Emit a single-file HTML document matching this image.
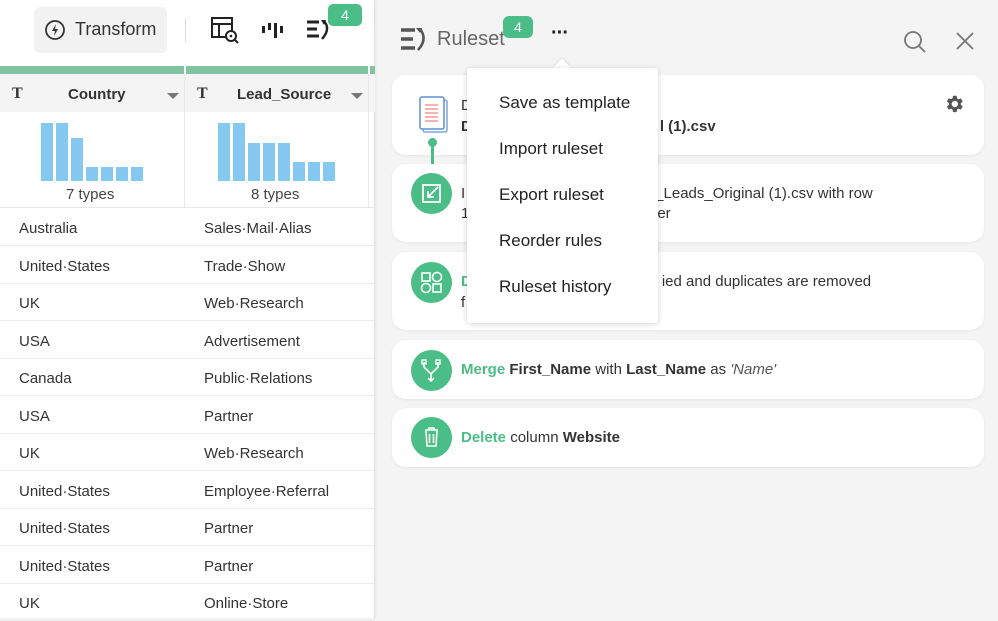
<!DOCTYPE html>
<html><head><meta charset="utf-8"><style>
*{box-sizing:border-box;margin:0;padding:0}
body{width:998px;height:618px;overflow:hidden;font-family:"Liberation Sans",sans-serif;background:#f4f4f4;position:relative;color:#333}
.left{position:absolute;left:0;top:0;width:375px;height:618px;background:#fff;border-right:1px solid #e2e2e2;box-shadow:1px 0 3px rgba(0,0,0,.06)}
.abs{position:absolute}
.row{position:absolute;left:0;width:375px;height:37.5px;border-bottom:1px solid #ececec;font-size:15px;color:#333}
.row span{position:absolute;top:12px}
.bar{position:absolute;background:#85c9f0;width:12px}
.card{position:absolute;left:392px;width:592px;background:#fff;border-radius:14px;box-shadow:0 1px 3px rgba(0,0,0,.06)}
.ic{position:absolute;left:19px;width:41px;height:41px;border-radius:50%;background:#4bbd87}
.ct{position:absolute;left:69px;font-size:15px;color:#333;line-height:22px}
.g{color:#4bbd87;font-weight:bold}
.menu{position:absolute;left:467px;top:68px;width:191px;height:255px;background:#fff;border-radius:3px;box-shadow:0 1px 6px rgba(0,0,0,.18)}
.menu div{position:absolute;left:32px;font-size:17px;color:#222}
</style></head><body>
<div class="left">
 <div class="abs" style="left:34px;top:7px;width:133px;height:46px;background:#f2f2f2;border-radius:6px"></div>
 <svg class="abs" style="left:44px;top:19px" width="22" height="22" viewBox="0 0 22 22"><circle cx="11" cy="11" r="9" fill="none" stroke="#333" stroke-width="1.8"/><path d="M12 5L8 12h3l-1 5 4-7h-3z" fill="#333"/></svg>
 <div class="abs" style="left:75px;top:19px;font-size:18px;color:#333">Transform</div>
 <div class="abs" style="left:185px;top:18px;width:1px;height:24px;background:#ddd"></div>
 <svg class="abs" style="left:211px;top:17px" width="30" height="28" viewBox="0 0 30 28"><rect x="1" y="1" width="20" height="19" fill="none" stroke="#222" stroke-width="2"/><path d="M1 7h20M8 7v13" stroke="#222" stroke-width="2"/><circle cx="20" cy="19" r="5" fill="#fff" stroke="#222" stroke-width="2"/><circle cx="20" cy="19" r="1.3" fill="#222"/><path d="M24 23l3 3" stroke="#222" stroke-width="2"/></svg>
 <svg class="abs" style="left:261px;top:22px" width="24" height="16"><rect x="1" y="4" width="3" height="7" fill="#222"/><rect x="7" y="1" width="3" height="7" fill="#222"/><rect x="13" y="1" width="3" height="15" fill="#222"/><rect x="19" y="4" width="3" height="7" fill="#222"/></svg>
 <svg class="abs" style="left:306px;top:19px" width="26" height="22"><path d="M1 3h12M1 10h10M1 17h12" stroke="#222" stroke-width="3"/><path d="M18 2q7 8 -2 18" fill="none" stroke="#222" stroke-width="2.4"/><path d="M15 1l5 0-2 5z" fill="#222"/></svg>
 <div class="abs" style="left:328px;top:4px;width:34px;height:22px;background:#4bbd87;border-radius:5px;color:#fff;font-size:14px;text-align:center;line-height:22px">4</div>
 <div class="abs" style="left:0;top:66px;width:375px;height:8px;background:#83c4a0"></div>
 <div class="abs" style="left:184px;top:66px;width:2px;height:142px;background:#fff"></div>
 <div class="abs" style="left:368px;top:66px;width:2px;height:142px;background:#fff"></div>
 <div class="abs" style="left:0;top:74px;width:375px;height:38px;background:#f4f4f4"></div>
 <div class="abs" style="left:184px;top:74px;width:1px;height:134px;background:#e8e8e8"></div>
 <div class="abs" style="left:368px;top:74px;width:1px;height:134px;background:#e8e8e8"></div>
 <div class="abs" style="left:12px;top:85px;font-family:'Liberation Serif',serif;font-weight:bold;font-size:16px">T</div>
 <div class="abs" style="left:68px;top:86px;font-size:15px;font-weight:bold;color:#333">Country</div>
 <div class="abs" style="left:167px;top:93px;border:6px solid transparent;border-top:6px solid #777;border-bottom:0"></div>
 <div class="abs" style="left:197px;top:85px;font-family:'Liberation Serif',serif;font-weight:bold;font-size:16px">T</div>
 <div class="abs" style="left:237px;top:86px;font-size:15px;font-weight:bold;color:#333">Lead_Source</div>
 <div class="abs" style="left:351px;top:93px;border:6px solid transparent;border-top:6px solid #777;border-bottom:0"></div>
 <div class="bar" style="left:41px;top:123px;height:58px"></div><div class="bar" style="left:56px;top:123px;height:58px"></div><div class="bar" style="left:71px;top:138px;height:43px"></div><div class="bar" style="left:86px;top:167px;height:14px"></div><div class="bar" style="left:101px;top:167px;height:14px"></div><div class="bar" style="left:116px;top:167px;height:14px"></div><div class="bar" style="left:131px;top:167px;height:14px"></div>
 <div class="bar" style="left:218px;top:123px;height:58px"></div><div class="bar" style="left:233px;top:123px;height:58px"></div><div class="bar" style="left:248px;top:143px;height:38px"></div><div class="bar" style="left:263px;top:143px;height:38px"></div><div class="bar" style="left:278px;top:143px;height:38px"></div><div class="bar" style="left:293px;top:162px;height:19px"></div><div class="bar" style="left:308px;top:162px;height:19px"></div><div class="bar" style="left:323px;top:162px;height:19px"></div>
 <div class="abs" style="left:66px;top:186px;font-size:15px;color:#444">7 types</div>
 <div class="abs" style="left:251px;top:186px;font-size:15px;color:#444">8 types</div>
 <div class="abs" style="left:0;top:207px;width:375px;height:1px;background:#e8e8e8"></div>
 <div class="row" style="top:208px"><span style="left:19px">Australia</span><span style="left:204px">Sales·Mail·Alias</span></div>
 <div class="row" style="top:246px"><span style="left:19px">United·States</span><span style="left:204px">Trade·Show</span></div>
 <div class="row" style="top:283px"><span style="left:19px">UK</span><span style="left:204px">Web·Research</span></div>
 <div class="row" style="top:321px"><span style="left:19px">USA</span><span style="left:204px">Advertisement</span></div>
 <div class="row" style="top:358px"><span style="left:19px">Canada</span><span style="left:204px">Public·Relations</span></div>
 <div class="row" style="top:396px"><span style="left:19px">USA</span><span style="left:204px">Partner</span></div>
 <div class="row" style="top:433px"><span style="left:19px">UK</span><span style="left:204px">Web·Research</span></div>
 <div class="row" style="top:471px"><span style="left:19px">United·States</span><span style="left:204px">Employee·Referral</span></div>
 <div class="row" style="top:508px"><span style="left:19px">United·States</span><span style="left:204px">Partner</span></div>
 <div class="row" style="top:546px"><span style="left:19px">United·States</span><span style="left:204px">Partner</span></div>
 <div class="row" style="top:583px"><span style="left:19px">UK</span><span style="left:204px">Online·Store</span></div>
</div>

<svg class="abs" style="left:399px;top:27px" width="30" height="25"><path d="M2 3h14M2 12h12M2 21h14" stroke="#555" stroke-width="3.4"/><path d="M21 2q8 10 -2 21" fill="none" stroke="#555" stroke-width="2.6"/><path d="M17 1l6 0-2 5z" fill="#555"/></svg>
<div class="abs" style="left:437px;top:28px;font-size:20px;color:#666">Ruleset</div>
<div class="abs" style="left:503px;top:16px;width:30px;height:22px;background:#4bbd87;border-radius:6px;color:#fff;font-size:14px;text-align:center;line-height:22px">4</div>
<div class="abs" style="left:551px;top:22px;font-size:20px;font-weight:bold;color:#222;letter-spacing:-1px">···</div>
<svg class="abs" style="left:903px;top:30px" width="24" height="24"><circle cx="10" cy="10" r="8" fill="none" stroke="#777" stroke-width="1.8"/><path d="M16 16l6 6" stroke="#777" stroke-width="1.8"/></svg>
<svg class="abs" style="left:956px;top:32px" width="18" height="18"><path d="M1 1l16 16M17 1L1 17" stroke="#777" stroke-width="1.8"/></svg>

<div class="card" style="top:75px;height:80px">
 <svg class="abs" style="left:27px;top:21px" width="30" height="38"><rect x="4" y="4" width="24" height="32" rx="2" fill="#fff" stroke="#7ba6dd" stroke-width="1.5"/><rect x="1" y="1" width="24" height="32" rx="2" fill="#fff" stroke="#5d8fd6" stroke-width="1.5"/><path d="M6 9h13M6 13h13M6 17h13M6 21h13M6 25h13" stroke="#f19a9a" stroke-width="1.5"/></svg>
 <div class="ct" style="top:20px">D</div>
 <div class="ct" style="top:41px;font-weight:bold">D<span style="margin-left:188px">l (1).csv</span></div>
 <svg class="abs" style="left:551px;top:18px" width="22" height="22" viewBox="0 0 24 24"><path fill="#555" d="M19.4 13a7.5 7.5 0 000-2l2.1-1.6-2-3.5-2.5 1a7 7 0 00-1.7-1L14.9 3h-4l-.4 2.7a7 7 0 00-1.7 1l-2.5-1-2 3.5L6.5 11a7.5 7.5 0 000 2l-2.2 1.6 2 3.5 2.5-1a7 7 0 001.7 1l.4 2.7h4l.4-2.7a7 7 0 001.7-1l2.5 1 2-3.5zM12.9 15.5a3.5 3.5 0 110-7 3.5 3.5 0 010 7z"/></svg>
</div>
<div class="abs" style="left:431px;top:138px;width:3px;height:40px;background:#4bbd87"></div>
<div class="abs" style="left:428px;top:138px;width:9px;height:9px;border-radius:50%;background:#4bbd87"></div>
<div class="card" style="top:164px;height:78px">
 <div class="ic" style="top:9px"><svg width="41" height="41"><rect x="12" y="12" width="17" height="17" fill="none" stroke="#fff" stroke-width="1.8"/><path d="M27 14l-10 10M17 18v6h6" fill="none" stroke="#fff" stroke-width="1.8"/></svg></div>
 <div class="ct" style="top:19px">I<span style="margin-left:190px">_Leads_Original (1).csv with row</span></div>
 <div class="ct" style="top:39px">1<span style="margin-left:188px">er</span></div>
</div>
<div class="card" style="top:252px;height:78px">
 <div class="ic" style="top:10px"><svg width="41" height="41"><rect x="11" y="11" width="8" height="8" fill="none" stroke="#fff" stroke-width="1.6"/><circle cx="26" cy="15" r="4.5" fill="none" stroke="#fff" stroke-width="1.6"/><circle cx="15" cy="26" r="4.5" fill="none" stroke="#fff" stroke-width="1.6"/><rect x="22" y="22" width="8" height="8" fill="none" stroke="#fff" stroke-width="1.6"/></svg></div>
 <div class="ct" style="top:19px"><span class="g">D</span><span style="margin-left:190px">ied and duplicates are removed</span></div>
 <div class="ct" style="top:40px">f</div>
</div>
<div class="card" style="top:340px;height:59px">
 <div class="ic" style="top:10px"><svg width="41" height="41"><path d="M13 12v5l7 7 7-7v-5M20 24v7M17 28l3 3 3-3" fill="none" stroke="#fff" stroke-width="1.6"/><rect x="11" y="10" width="4" height="4" fill="none" stroke="#fff" stroke-width="1.4"/><rect x="25" y="10" width="4" height="4" fill="none" stroke="#fff" stroke-width="1.4"/></svg></div>
 <div class="ct" style="top:19px"><span class="g">Merge</span> <b>First_Name</b> with <b>Last_Name</b> as <i style="color:#555">'Name'</i></div>
</div>
<div class="card" style="top:408px;height:59px">
 <div class="ic" style="top:9px"><svg width="41" height="41"><path d="M14 13h13M18 13v-2h5v2M15 14l1 15h9l1-15M18.5 17v9M22.5 17v9" fill="none" stroke="#fff" stroke-width="1.6"/></svg></div>
 <div class="ct" style="top:19px"><span class="g">Delete</span> column <b>Website</b></div>
</div>

<div class="abs" style="left:556px;top:61px;width:12px;height:12px;background:#fff;transform:rotate(45deg);box-shadow:-1px -1px 2px rgba(0,0,0,.08)"></div>
<div class="menu">
 <div style="top:25px">Save as template</div>
 <div style="top:71px">Import ruleset</div>
 <div style="top:117px">Export ruleset</div>
 <div style="top:163px">Reorder rules</div>
 <div style="top:209px">Ruleset history</div>
</div>
</body></html>
